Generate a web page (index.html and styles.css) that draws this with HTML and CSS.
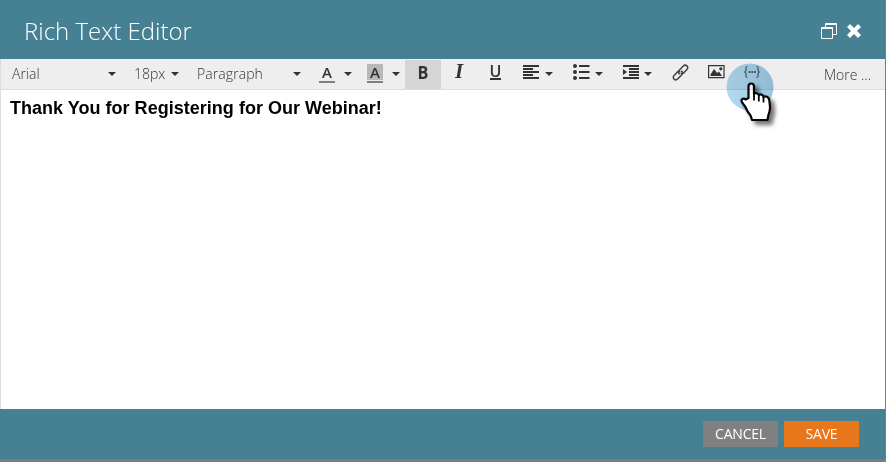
FILE: index.html
```html
<!DOCTYPE html>
<html lang="en">
<head>
<meta charset="utf-8">
<title>Rich Text Editor</title>
<link rel="stylesheet" href="styles.css">
</head>
<body>
<div class="dialog">
  <header class="header">
    <h1>Rich Text Editor</h1>
    <div class="window-actions">
      <svg width="16" height="16" viewBox="0 0 16 16" fill="none" stroke="#fff"><path d="M4.500 4V.5h11v11H12M4 1.500h12M.5 4.500h11v11H.5zM0 5.500h12"/></svg>
      <svg width="14" height="14" viewBox="0 0 14 14"><path d="M3 0L7 4 11 0 14 3 10 7 14 11 11 14 7 10 3 14 0 11 4 7 0 3z" fill="#fff"/></svg>
    </div>
  </header>
  <div class="toolbar">
    <div class="tool w-font"><span>Arial</span><i class="caret"></i></div>
    <div class="tool w-size"><span>18px</span><i class="caret"></i></div>
    <div class="tool w-block"><span>Paragraph</span><i class="caret"></i></div>
    <div class="tool w-color"><b class="letter">A</b><i class="caret"></i></div>
    <div class="tool w-color"><b class="letter marked">A</b><i class="caret"></i></div>
    <div class="tool w-icon active"><b class="glyph bold">B</b></div>
    <div class="tool w-icon"><b class="glyph italic">I</b></div>
    <div class="tool w-icon"><b class="glyph under">U</b></div>
    <div class="tool w-menu">
      <svg width="17" height="15" viewBox="0 0 17 15" stroke="#333" stroke-width="2"><path d="M0 1h16M0 4h10M0 7h16M0 10h10M0 13h16"/></svg><i class="caret"></i>
    </div>
    <div class="tool w-menu">
      <svg width="17" height="16" viewBox="0 0 17 16"><path d="M6 2h10.500M6 8h10.500M6 14h10.500" stroke="#333" stroke-width="2"/><g fill="#333"><circle cx="2" cy="2" r="2"/><circle cx="2" cy="8" r="2"/><circle cx="2" cy="14" r="2"/></g></svg><i class="caret"></i>
    </div>
    <div class="tool w-indent">
      <svg width="17" height="15" viewBox="0 0 17 15"><path d="M0 1h16M6 4h10M6 7h10M6 10h10M0 13h16" stroke="#333" stroke-width="2"/><path d="M0 4l4 3-4 3z" fill="#333"/></svg><i class="caret"></i>
    </div>
    <div class="tool w-icon">
      <svg width="17" height="17" viewBox="0 0 17 17" fill="none" stroke="#444" stroke-width="1.500" stroke-linecap="round"><path d="M7.300 9.800C5.900 8.700 6.400 7.100 7.400 6.100l3.700-3.900c1.200-1.200 2.700-1.300 3.800-.3s1.100 2.500 0 3.700l-2.800 3c-.9.900-1.900 1.100-2.900.7"/><path d="M9.700 7.200c1.400 1.100.9 2.700-.1 3.700l-3.700 3.900c-1.200 1.200-2.700 1.300-3.800.3S1 12.600 2.100 11.400l2.800-3c.9-.9 1.900-1.100 2.900-.7"/></svg>
    </div>
    <div class="tool w-icon">
      <svg width="17" height="14" viewBox="0 0 17 14"><path d="M.6.6h15.400v12H.6z" fill="none" stroke="#333" stroke-width="1.200"/><path d="M2.500 11V9.500L6 4l3.200 4L11 6.500l3 4.500z" fill="#333"/><circle cx="12.800" cy="3.800" r="1.600" fill="#333"/></svg>
    </div>
    <div class="tool w-icon">
      <svg width="17" height="13" viewBox="0 0 17 13" fill="none" stroke="#444"><path d="M3.500.5C1.800.5 2 1.500 2 3S2 6 .5 6C2 6 2 7.500 2 9s-.2 2.500 1.500 2.500M12.500.5C14.200.5 14 1.500 14 3s0 3 1.500 3C14 6 14 7.500 14 9s.2 2.500-1.500 2.500"/><path d="M4.500 6h7.500" stroke-width="1.600" stroke-dasharray="2 .8"/></svg>
    </div>
    <span class="more">More ...</span>
  </div>
  <main class="content"><p>Thank You for Registering for Our Webinar!</p></main>
  <footer class="footer">
    <button class="cancel">CANCEL</button>
    <button class="save">SAVE</button>
  </footer>
</div>
<div class="pointer">
  <svg width="62" height="72" viewBox="724 60 62 72">
    <defs><linearGradient id="halo" x1="0" x2="1" y1="0" y2="0"><stop offset="0" stop-color="#b3dbf2"/><stop offset="1" stop-color="#9ac9e3"/></linearGradient></defs>
    <circle cx="750" cy="87" r="23.500" fill="url(#halo)"/>
    <path class="hand" d="M748.500 98V86.500c0-4 5.500-4 5.500 0v7.500c1-1.500 4.500-1 4.800 1.200 1.200-1.400 4.500-.8 4.700 1.600 1.800-1 5.300.1 5.800 3.200l.7 7c.3 4-1.300 6-1.800 9l-.7 4H752l-1.200-4c-2-2.500-4-5.500-5.400-9l-3.300-4.500c-1.800-3.300 1.400-5 3.600-3z"/>
    <path d="M754 93v7.500M758.800 95v6.500M763.500 97v5.500" fill="none" stroke="#050505" stroke-width="1.800"/>
  </svg>
</div>
</body>
</html>
```
FILE: styles.css
```css
* { box-sizing: border-box; }
body { margin: 0; font-family: "Open Sans", sans-serif; background: #7d7b7f; }
.dialog { height: 462px; padding: 0 1px 3px 0; display: flex; flex-direction: column; }
.header { height: 59px; background: #468193; color: #fff; display: flex; justify-content: space-between; align-items: center; padding: 2px 24px 0; }
h1 { margin: 0; font-size: 24px; font-weight: 300; line-height: 32px; }
.window-actions { display: flex; align-items: center; gap: 10px; }
.toolbar { height: 31px; background: #eee; border-left: 1px solid #ddd; border-bottom: 1px solid #ddd; display: flex; color: #333; font-size: 14px; font-weight: 300; }
.tool { display: flex; height: 29px; align-items: center; justify-content: space-between; padding: 0 8px 0 10px; margin-top: 1px; flex: none; }
.tool > span { margin-top: -2px; }
.tool svg { display: block; margin-top: -5px; }
.w-font { width: 123px; padding-left: 11px; }
.w-size { width: 63px; }
.w-block { width: 122px; }
.w-block span { letter-spacing: .08px; }
.w-color { width: 48px; padding-right: 5px; }
.w-icon { width: 36px; padding: 0 9px 0 10px; }
.w-menu { width: 50px; padding-right: 10px; }
.w-indent { width: 49px; padding-right: 10px; }
.active { background: #d5d5d5; }
.caret { width: 0; height: 0; border: 4px solid transparent; border-top-color: #333; border-bottom: 0; margin-top: -1px; }
.letter { width: 16px; height: 19px; margin-top: -2px; border-bottom: 2px solid #808080; text-align: center; font-size: 15px; font-weight: 600; line-height: 16px; }
.marked { background: linear-gradient(#b8b8b8 16px, transparent 16px); }
.glyph { width: 16px; text-align: center; line-height: 20px; margin-top: -5px; }
.bold { font-size: 18px; font-weight: 700; transform: scaleX(.9); }
.italic { font: italic 600 21px/20px "Liberation Serif", serif; margin-top: -7px; }
.under { font-size: 16px; font-weight: 600; width: 11px; margin: -4px auto 0; line-height: 13px; border-bottom: 2px solid #333; height: 15px; display: flex; justify-content: center; align-items: center; }
.more { margin-left: auto; padding-right: 14px; line-height: 32px; }
.content { flex: 1; background: #fff; border-left: 1px solid #ddd; padding: 8px 9px; }
.content p { margin: 0; color: #000; font: bold 18px/21px "Liberation Sans", Arial, sans-serif; letter-spacing: .02px; }
.footer { height: 50px; background: #468193; display: flex; justify-content: flex-end; gap: 6px; padding: 12px 26px 0 0; }
button { width: 75px; height: 26px; border: 0; padding: 0; color: #fff; font: 14px/26px "Open Sans", sans-serif; letter-spacing: -.2px; }
.cancel { background: #808080; }
.save { background: #e8761b; }
.pointer { position: absolute; left: 724px; top: 60px; width: 62px; height: 72px; pointer-events: none; mix-blend-mode: multiply; }
.pointer svg { display: block; }
.hand { fill: #fff; stroke: #050505; stroke-width: 2.2px; stroke-linejoin: round; filter: drop-shadow(4px 4px 2px rgba(0, 0, 0, .55)); }
```
